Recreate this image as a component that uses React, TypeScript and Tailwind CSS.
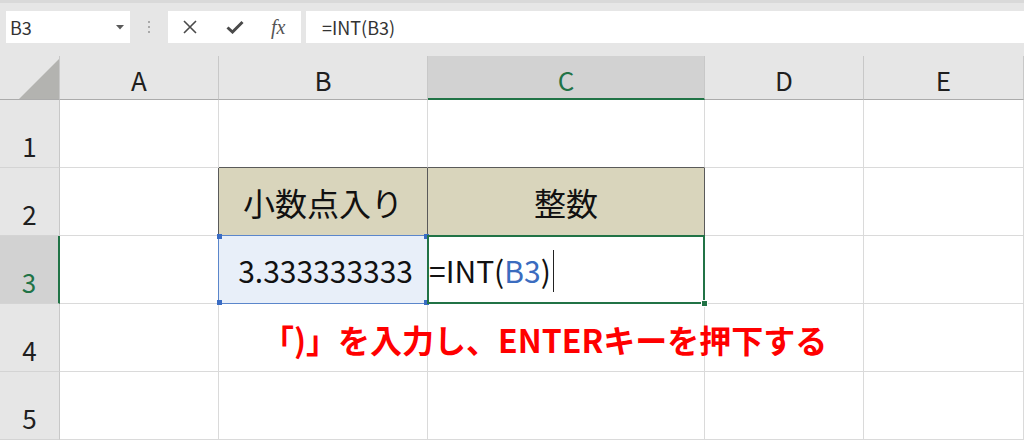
import React from "react";

const cols = ["A", "B", "C", "D", "E"];
const font = { fontFamily: '"Noto Sans CJK JP", "Noto Sans", sans-serif' };

function Corner() {
  return (
    <div className="relative border-r border-b border-r-[#c8c8c8] border-b-[#ababab] bg-[#e6e6e6]">
      <svg className="absolute left-[19px] top-[3px]" width="40" height="40" viewBox="0 0 40 40">
        <polygon points="0,40 40,40 40,0" fill="#b3b3b0" />
      </svg>
    </div>
  );
}

function ColHeader({ label }: { label: string }) {
  const active = label === "C";
  return (
    <div
      className={
        "flex items-center justify-center border-r border-r-[#c8c8c8] pt-1 text-[26px] " +
        (active
          ? "bg-[#d2d2d2] text-[#217346] border-b-2 border-b-[#217346]"
          : "bg-[#e6e6e6] text-[#1f1f1f] border-b border-b-[#ababab]")
      }
    >
      {label}
    </div>
  );
}

function RowHeader({ n }: { n: number }) {
  const active = n === 3;
  return (
    <div
      className={
        "flex items-end justify-center pb-2 text-[26px] leading-none border-b border-b-[#d4d4d4] " +
        (active
          ? "bg-[#d2d2d2] text-[#217346] border-r-2 border-r-[#217346]"
          : "bg-[#e6e6e6] text-[#1f1f1f] border-r border-r-[#c8c8c8]")
      }
    >
      {n}
    </div>
  );
}

function Cell({ r, c }: { r: number; c: string }) {
  let cls = "relative bg-white border-r border-b border-r-[#dadada] border-b-[#dadada]";
  let content: React.ReactNode = null;

  if (r === 1 && (c === "B" || c === "C")) cls = cls.replace("border-b-[#dadada]", "border-b-[#5a5a5a]");
  if (r === 2 && c === "A") cls = cls.replace("border-r-[#dadada]", "border-r-[#5a5a5a]");
  if (r === 2 && (c === "B" || c === "C")) {
    cls =
      "relative flex items-center justify-center bg-[#d9d5bc] border-r border-b border-r-[#5a5a5a] border-b-[#5a5a5a] text-[32px] text-[#111]";
    content = c === "B" ? "小数点入り" : "整数";
  }
  if (r === 3 && c === "B") {
    cls = "relative flex items-center justify-end pr-[14px] bg-[#e8eff9] border-r border-b border-r-[#dadada] border-b-[#dadada] text-[30px] text-[#111]";
    content = (
      <>
        <span className="pt-0.5">3.333333333</span>
        <div className="absolute -left-px -top-px right-[-1px] bottom-[-1px] z-10 border border-[#5b86cb]">
          <span className="absolute -left-[2px] -top-[2px] h-[5px] w-[5px] bg-[#3a6cc4]" />
          <span className="absolute -right-[2px] -top-[2px] h-[5px] w-[5px] bg-[#3a6cc4]" />
          <span className="absolute -left-[2px] -bottom-[2px] h-[5px] w-[5px] bg-[#3a6cc4]" />
          <span className="absolute -right-[2px] -bottom-[2px] h-[5px] w-[5px] bg-[#3a6cc4]" />
        </div>
      </>
    );
  }
  if (r === 3 && c === "C") {
    cls = "relative flex items-center pl-[1px] bg-white border-r border-b border-r-[#dadada] border-b-[#dadada] text-[30px] text-[#111]";
    content = (
      <>
        <span className="flex items-center pt-0.5">
          =INT(<span className="text-[#3b6cbf]">B3</span>)
          <span className="ml-[2px] h-[42px] border-l border-[#222]" />
        </span>
        <div className="absolute -left-px -top-px right-[-1px] bottom-[-1px] z-10 border-2 border-[#217346]">
          <span className="absolute -right-[5px] -bottom-[5px] h-[7px] w-[7px] border border-white bg-[#217346]" />
        </div>
      </>
    );
  }
  return <div className={cls}>{content}</div>;
}

function FormulaBar() {
  return (
    <div className="h-[56px] bg-[#e6e6e6] border-t-[3px] border-[#d9d9d9]">
      <div className="mt-[8px] flex h-[32px] items-stretch">
        <div className="ml-[6px] flex w-[124px] items-center justify-between bg-white pl-[4px] pr-[6px] text-[18px] text-[#333]">
          <span>B3</span>
          <svg width="8" height="5" viewBox="0 0 8 5">
            <polygon points="0,0 8,0 4,4.5" fill="#5a5a5a" />
          </svg>
        </div>
        <div className="flex w-[38px] flex-col items-center justify-center gap-[3px]">
          <span className="h-[2px] w-[2px] bg-[#a9a9a9]" />
          <span className="h-[2px] w-[2px] bg-[#a9a9a9]" />
          <span className="h-[2px] w-[2px] bg-[#a9a9a9]" />
        </div>
        <div className="flex w-[133px] items-center bg-white">
          <svg className="ml-[15px]" width="14" height="14" viewBox="0 0 14 14">
            <path d="M1 1 L13 13 M13 1 L1 13" stroke="#4a4a4a" strokeWidth="1.6" />
          </svg>
          <svg className="ml-[29px]" width="18" height="14" viewBox="0 0 18 14">
            <path d="M1.5 7.5 L6.5 12 L16.5 2" stroke="#4a4a4a" strokeWidth="3" fill="none" />
          </svg>
          <span
            className="ml-[27px] text-[20px] italic text-[#555]"
            style={{ fontFamily: '"Liberation Serif", serif' }}
          >
            fx
          </span>
        </div>
        <div className="ml-[5px] flex flex-1 items-center bg-white pl-[16px] text-[18px] text-[#333]">
          =INT(B3)
        </div>
      </div>
    </div>
  );
}

export default function App() {
  const rows = [1, 2, 3, 4, 5];
  return (
    <div className="h-[440px] w-[1024px] overflow-hidden bg-white" style={font}>
      <FormulaBar />
      <div className="relative grid grid-cols-[60px_159px_209px_277px_159px_160px] grid-rows-[44px_repeat(5,68px)]">
        <Corner />
        {cols.map((c) => (
          <ColHeader key={c} label={c} />
        ))}
        {rows.map((r) => (
          <React.Fragment key={r}>
            <RowHeader n={r} />
            {cols.map((c) => (
              <Cell key={c} r={r} c={c} />
            ))}
          </React.Fragment>
        ))}
        <div className="absolute left-[262px] top-[267px] z-20 whitespace-nowrap text-[32px] font-bold leading-none text-[#ff0000]">
          「)」を入力し、ENTERキーを押下する
        </div>
      </div>
    </div>
  );
}
